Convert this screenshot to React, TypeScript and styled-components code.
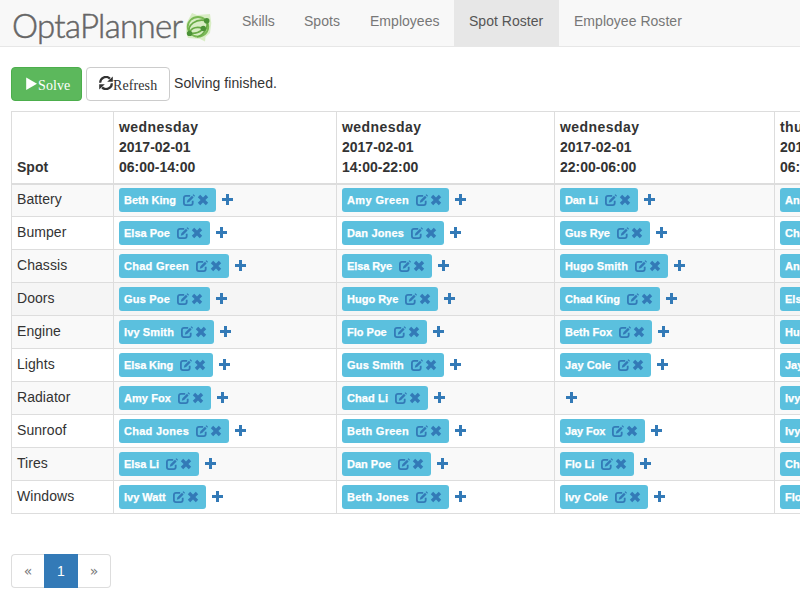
import React from "react";
import styled, { createGlobalStyle, css } from "styled-components";

const GlobalStyle = createGlobalStyle`
  * { box-sizing: border-box; }
  html, body { margin: 0; padding: 0; }
  body {
    width: 800px;
    height: 600px;
    overflow: hidden;
    background: #fff;
    color: #333;
    font: 14px/20px "Liberation Sans", Arial, sans-serif;
  }
`;

const Page = styled.div`
  width: 800px;
  height: 600px;
  overflow: hidden;
`;

const Navbar = styled.nav`
  display: flex;
  height: 47px;
  background: #f8f8f8;
  border-bottom: 1px solid #e7e7e7;
`;

const Brand = styled.div`
  display: flex;
  flex: none;
  width: 227px;
  height: 46px;
  padding-left: 12px;
`;

const BrandName = styled.span`
  width: 173px;
  color: #666;
  font: 300 33px/50px Lato, sans-serif;
  letter-spacing: -0.7px;
  -webkit-text-stroke: 0.5px #666;
  white-space: nowrap;
`;

const BrandMark = styled.svg`
  width: 28px;
  height: 32px;
  margin-top: 12px;
`;

const NavItem = styled.a<{ $width: number; $active?: boolean }>`
  flex: none;
  width: ${(p) => p.$width}px;
  height: 47px;
  padding: 11px 0 15px 15px;
  color: ${(p) => (p.$active ? "#555" : "#777")};
  letter-spacing: 0.03px;
  ${(p) => p.$active && css`background: #e7e7e7;`}
  white-space: nowrap;
`;

const Content = styled.main`
  padding: 20px 0 0 11px;
`;

const Toolbar = styled.div`
  display: flex;
  height: 34px;
`;

const Button = styled.button<{ $primary?: boolean; $width: number }>`
  display: flex;
  align-items: center;
  width: ${(p) => p.$width}px;
  height: 34px;
  margin-right: 4px;
  padding: 0 0 0 ${(p) => (p.$primary ? 13 : 12)}px;
  border: 1px solid ${(p) => (p.$primary ? "#4cae4c" : "#ccc")};
  border-radius: 4px;
  background: ${(p) => (p.$primary ? "#5cb85c" : "#fff")};
  color: ${(p) => (p.$primary ? "#fff" : "#333")};
  font: 14px/20px "Liberation Serif", serif;

  svg {
    margin-bottom: 2px;
  }
`;

const ButtonText = styled.span`
  padding-top: 3px;
  letter-spacing: 0.1px;
`;

const Status = styled.span`
  padding-top: 6px;
  letter-spacing: 0.06px;
`;

const Table = styled.table`
  width: 983px;
  margin-top: 10px;
  border-collapse: collapse;
  table-layout: fixed;
`;

const HeadCell = styled.th`
  height: 72px;
  padding: 4px 5px 6px;
  border: 1px solid #ddd;
  border-bottom-width: 2px;
  text-align: left;
  vertical-align: bottom;
  white-space: nowrap;
`;

const Day = styled.div`
  letter-spacing: 0.45px;
`;

const Row = styled.tr<{ $hovered?: boolean }>`
  height: 33px;
  background: #fff;
  &:nth-child(odd) { background: #f9f9f9; }
  ${(p) => p.$hovered && css`&& { background: #f5f5f5; }`}
`;

const Cell = styled.td`
  height: 33px;
  padding: 0 5px;
  border: 1px solid #ddd;
  vertical-align: middle;
`;

const SpotCell = styled(Cell)`
  padding-bottom: 2px;
  letter-spacing: 0.06px;
`;

const Assignment = styled.div`
  display: flex;
  align-items: center;
  height: 24px;
`;

const Label = styled.span<{ $width: number }>`
  display: flex;
  align-items: center;
  flex: none;
  justify-content: space-between;
  width: ${(p) => p.$width}px;
  height: 24px;
  padding: 0 7px 0 5px;
  border-radius: 3px;
  background: #5bc0de;
  color: #fff;
  font-size: 11px;
  font-weight: bold;
  line-height: 24px;
  white-space: nowrap;
`;

const Person = styled.span<{ $tracking: number }>`
  letter-spacing: ${(p) => p.$tracking}px;
  -webkit-text-stroke: 0.25px #fff;
`;

const Actions = styled.span`
  display: flex;
  gap: 2px;
  color: #337ab7;
`;

const Glyph = styled.svg<{ $size: number }>`
  display: block;
  flex: none;
  width: ${(p) => p.$size}px;
  height: ${(p) => p.$size}px;
  fill: currentColor;
`;

const AddButton = styled.span`
  display: flex;
  margin-left: 6px;
  margin-bottom: 1px;
  color: #337ab7;
`;

const Pagination = styled.div`
  display: flex;
  width: 100px;
  height: 34px;
  margin-top: 40px;
`;

const PageLink = styled.a<{ $active?: boolean; $side?: "left" | "right" }>`
  width: ${(p) => (p.$active ? 34 : 33)}px;
  height: 34px;
  border: 1px solid ${(p) => (p.$active ? "#337ab7" : "#ddd")};
  ${(p) => p.$side === "left" && css`border-right: 0; border-radius: 4px 0 0 4px;`}
  ${(p) => p.$side === "right" && css`border-left: 0; border-radius: 0 4px 4px 0;`}
  background: ${(p) => (p.$active ? "#337ab7" : "#fff")};
  color: ${(p) => (p.$active ? "#fff" : "#777")};
  ${(p) => p.$side && css`font-family: "DejaVu Sans", sans-serif;`}
  line-height: 32px;
  text-align: center;
`;

const PlayIcon = () => (
  <Glyph $size={13} viewBox="0 0 13 13">
    <path d="M1.2 0.5 L12 6.8 L1.2 13 Z" />
  </Glyph>
);

const RefreshIcon = () => (
  <Glyph $size={14} viewBox="0 0 14 14">
    <path d="M1.2 6.8 A5.7 5.7 0 0 1 10.9 2.6" fill="none" stroke="currentColor" strokeWidth="2.2" />
    <path d="M13.8 0.4 V5.8 H8.2 Z" />
    <path d="M12.8 7.2 A5.7 5.7 0 0 1 3.1 11.4" fill="none" stroke="currentColor" strokeWidth="2.2" />
    <path d="M0.2 13.6 V8.2 H5.8 Z" />
  </Glyph>
);

const EditIcon = () => (
  <Glyph $size={12} viewBox="0 0 12 12">
    <path
      d="M7.2 1.8 H3 A2.1 2.1 0 0 0 0.9 3.9 V9 A2.1 2.1 0 0 0 3 11.1 H7.6 A2.1 2.1 0 0 0 9.7 9 V6.8"
      fill="none"
      stroke="currentColor"
      strokeWidth="1.8"
    />
    <path d="M3.8 8.7 L4.4 6.3 L9 1.8 L10.6 3.4 L6.1 8 Z M9.6 1.1 L10.4 0.3 L12 1.8 L11.2 2.7 Z" />
  </Glyph>
);

const RemoveIcon = () => (
  <Glyph $size={12} viewBox="0 0 12 12">
    <path d="M0.8 3.2 L3.2 0.8 L6 3.6 L8.8 0.8 L11.2 3.2 L8.4 6 L11.2 8.8 L8.8 11.2 L6 8.4 L3.2 11.2 L0.8 8.8 L3.6 6 Z" />
  </Glyph>
);

const PlusIcon = () => (
  <Glyph $size={11} viewBox="0 0 11 11">
    <path d="M4 0 H7 V4 H11 V7 H7 V11 H4 V7 H0 V4 H4 Z" />
  </Glyph>
);

type Entry = [name: string, width: number, tracking: number] | null;

const shifts = [
  { day: "wednesday", date: "2017-02-01", time: "06:00-14:00" },
  { day: "wednesday", date: "2017-02-01", time: "14:00-22:00" },
  { day: "wednesday", date: "2017-02-01", time: "22:00-06:00" },
  { day: "thursday", date: "2017-02-02", time: "06:00-14:00" },
];

const spots: { spot: string; entries: Entry[] }[] = [
  { spot: "Battery", entries: [["Beth King", 97, 0], ["Amy Green", 107, 0.37], ["Dan Li", 78, -0.1], ["Anna Fox", 92, 0.07]] },
  { spot: "Bumper", entries: [["Elsa Poe", 91, 0], ["Dan Jones", 102, 0.15], ["Gus Rye", 90, 0.05], ["Chad Fox", 96, 0]] },
  { spot: "Chassis", entries: [["Chad Green", 110, 0.27], ["Elsa Rye", 90, -0.1], ["Hugo Smith", 108, 0.13], ["Anna King", 99, 0]] },
  { spot: "Doors", entries: [["Gus Poe", 91, 0.2], ["Hugo Rye", 96, 0], ["Chad King", 100, 0], ["Elsa Fox", 91, 0]] },
  { spot: "Engine", entries: [["Ivy Smith", 95, 0.12], ["Flo Poe", 85, 0], ["Beth Fox", 92, 0], ["Hugo Fox", 97, 0]] },
  { spot: "Lights", entries: [["Elsa King", 94, -0.12], ["Gus Smith", 102, 0.22], ["Jay Cole", 91, 0.1], ["Jay Green", 102, 0]] },
  { spot: "Radiator", entries: [["Amy Fox", 92, 0.07], ["Chad Li", 86, 0.1], null, ["Ivy Poe", 85, 0]] },
  { spot: "Sunroof", entries: [["Chad Jones", 110, 0.27], ["Beth Green", 107, 0.27], ["Jay Fox", 85, -0.1], ["Ivy Green", 97, 0]] },
  { spot: "Tires", entries: [["Elsa Li", 80, -0.07], ["Dan Poe", 89, 0], ["Flo Li", 74, 0], ["Chad Rye", 98, 0]] },
  { spot: "Windows", entries: [["Ivy Watt", 87, 0], ["Beth Jones", 107, 0.27], ["Ivy Cole", 88, 0.1], ["Flo King", 91, 0]] },
];

const Logo = () => (
  <Brand>
    <BrandName>OptaPlanner</BrandName>
    <BrandMark viewBox="0 0 28 32">
      <path d="M7 1 L12 3 L25 2 L26.3 11 L25 21 L20.5 25 L20 29.5 L15 27 L3 26 L1 20 L1.5 11 Z" fill="#d8edc4" />
      <ellipse cx="13" cy="14.8" rx="10.3" ry="9.8" fill="none" stroke="#79b854" strokeWidth="1.8" />
      <path d="M4.5 21 C2 13 11 6 21.5 8.8 M4.5 21 C6 15 13 14.5 18 16.5 M4.5 21 C10 22 16 20 18 16.5 M21.5 8.8 C24 15 19 23 12 25" fill="none" stroke="#68aa45" strokeWidth="1.6" />
      <g fill="#4b9237">
        <circle cx="21.7" cy="8.8" r="2.8" />
        <circle cx="18.3" cy="16.5" r="2.7" />
        <circle cx="4.6" cy="21.4" r="2.7" />
      </g>
    </BrandMark>
  </Brand>
);

const ShiftAssignment = ({ entry }: { entry: Entry }) => (
  <Assignment>
    {entry && (
      <Label $width={entry[1]}>
        <Person $tracking={entry[2]}>{entry[0]}</Person>
        <Actions>
          <EditIcon />
          <RemoveIcon />
        </Actions>
      </Label>
    )}
    <AddButton>
      <PlusIcon />
    </AddButton>
  </Assignment>
);

export default function App() {
  return (
    <Page>
      <GlobalStyle />
      <Navbar>
        <Logo />
        <NavItem $width={62}>Skills</NavItem>
        <NavItem $width={66}>Spots</NavItem>
        <NavItem $width={99}>Employees</NavItem>
        <NavItem $width={105} $active>Spot Roster</NavItem>
        <NavItem $width={138}>Employee Roster</NavItem>
      </Navbar>
      <Content>
        <Toolbar>
          <Button $primary $width={71}>
            <PlayIcon />
            <ButtonText>Solve</ButtonText>
          </Button>
          <Button $width={84}>
            <RefreshIcon />
            <ButtonText>Refresh</ButtonText>
          </Button>
          <Status>Solving finished.</Status>
        </Toolbar>
        <Table>
          <colgroup>
            <col width="102" />
            <col width="223" />
            <col width="218" />
            <col width="220" />
            <col width="220" />
          </colgroup>
          <thead>
            <tr>
              <HeadCell>Spot</HeadCell>
              {shifts.map((shift, i) => (
                <HeadCell key={i}>
                  <Day>{shift.day}</Day>
                  <div>{shift.date}</div>
                  <div>{shift.time}</div>
                </HeadCell>
              ))}
            </tr>
          </thead>
          <tbody>
            {spots.map(({ spot, entries }) => (
              <Row key={spot} $hovered={spot === "Doors"}>
                <SpotCell>{spot}</SpotCell>
                {entries.map((entry, i) => (
                  <Cell key={i}>
                    <ShiftAssignment entry={entry} />
                  </Cell>
                ))}
              </Row>
            ))}
          </tbody>
        </Table>
        <Pagination>
          <PageLink $side="left">«</PageLink>
          <PageLink $active>1</PageLink>
          <PageLink $side="right">»</PageLink>
        </Pagination>
      </Content>
    </Page>
  );
}
